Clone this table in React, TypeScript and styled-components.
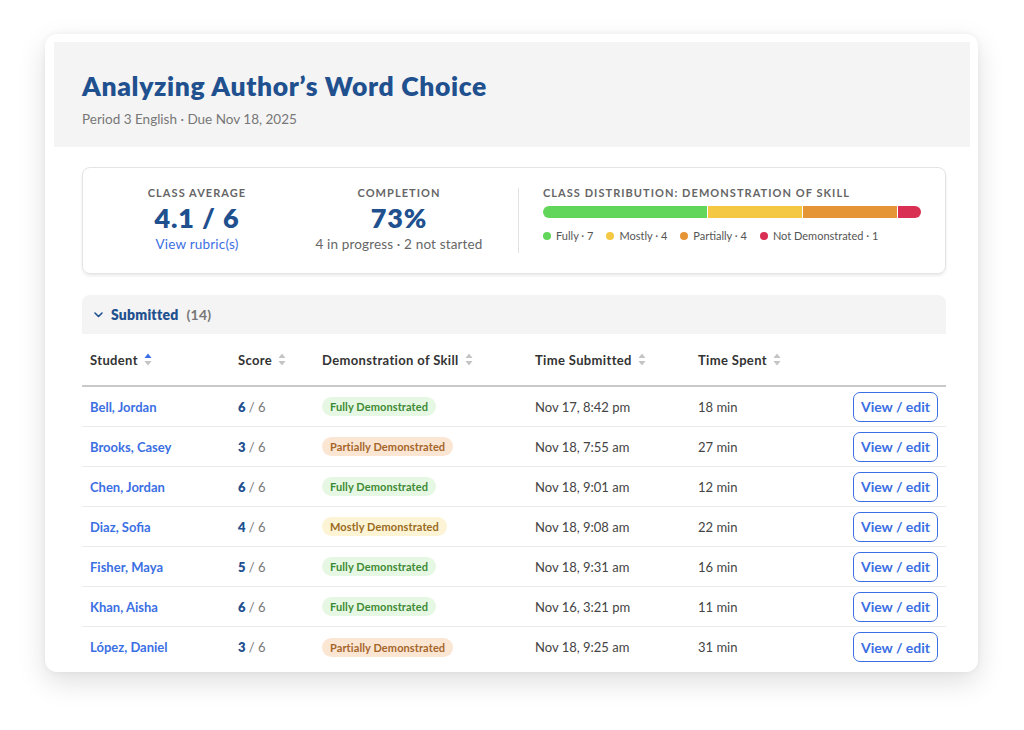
import React from "react";
import styled, { createGlobalStyle } from "styled-components";

const Global = createGlobalStyle`
  html, body { margin: 0; padding: 0; background: #ffffff; }
  body { font-family: "Lato", "Noto Sans", sans-serif; color: #333; -webkit-font-smoothing: antialiased; }
  * { box-sizing: border-box; }
`;

const Page = styled.div`
  padding: 34px 0 0 45px;
  width: 1024px;
  height: 730px;
`;

const Card = styled.div`
  width: 933px;
  height: 638px;
  background: #fff;
  border-radius: 12px;
  box-shadow: 0 10px 28px rgba(0, 0, 0, 0.13), 0 0 6px rgba(0, 0, 0, 0.05);
  padding: 8px 8px 5px 9px;
  display: flex;
  flex-direction: column;
`;

const Header = styled.header`
  background: #f4f4f4;
  height: 105px;
  padding: 28px 28px 0 28px;
`;

const Title = styled.h1`
  margin: 0;
  font-size: 26.5px;
  line-height: 32px;
  font-weight: 800;
  color: #21508f;
  letter-spacing: 0.65px;
`;

const Subtitle = styled.div`
  margin-top: 7px;
  font-size: 13.5px;
  line-height: 20px;
  color: #777;
`;

const Body = styled.div`
  padding: 20px 24px 0 28px;
  display: flex;
  flex-direction: column;
`;

const Stats = styled.section`
  height: 107px;
  border: 1px solid #e4e4e4;
  border-radius: 8px;
  box-shadow: 0 2px 3px rgba(0, 0, 0, 0.08);
  display: flex;
  align-items: flex-start;
  padding: 18px 24px 0 13px;
`;

const StatCol = styled.div`
  width: 202px;
  display: flex;
  flex-direction: column;
  align-items: center;
`;

const Label = styled.div`
  font-size: 11px;
  line-height: 14px;
  font-weight: 700;
  letter-spacing: 1.05px;
  text-transform: uppercase;
  color: #666;
`;

const BigValue = styled.div`
  margin-top: 3px;
  font-size: 27px;
  line-height: 30px;
  font-weight: 800;
  letter-spacing: 0.9px;
  color: #21508f;
`;

const RubricLink = styled.a`
  margin-top: 2px;
  font-size: 13.5px;
  line-height: 18px;
  letter-spacing: 0.2px;
  color: #3b6fe3;
  text-decoration: none;
`;

const Muted = styled.div`
  margin-top: 2px;
  font-size: 13.5px;
  line-height: 18px;
  letter-spacing: 0.15px;
  color: #666;
`;

const Divider = styled.div`
  width: 1px;
  align-self: stretch;
  margin: 2px 24px 20px 18px;
  background: #e2e2e2;
`;

const Dist = styled.div`
  flex: 1;
  display: flex;
  flex-direction: column;
`;

const Bar = styled.div`
  margin-top: 6px;
  height: 12px;
  border-radius: 6px;
  overflow: hidden;
  display: flex;
  gap: 1px;
  background: #fff;
`;

const Seg = styled.div<{ $c: string; $n: number }>`
  flex: ${(p) => p.$n} 1 0;
  background: ${(p) => p.$c};
`;

const Legend = styled.div`
  margin-top: 11px;
  display: flex;
  gap: 13px;
  font-size: 11px;
  line-height: 14px;
  color: #555;
`;

const LegendItem = styled.div`
  display: flex;
  align-items: center;
  gap: 5px;
`;

const Dot = styled.span<{ $c: string }>`
  width: 8px;
  height: 8px;
  border-radius: 50%;
  background: ${(p) => p.$c};
`;

const Section = styled.section`
  margin-top: 21px;
`;

const SectionBar = styled.div`
  height: 39px;
  background: #f4f4f4;
  border-radius: 8px 8px 0 0;
  display: flex;
  align-items: center;
  padding-left: 12px;
  gap: 8px;
`;

const SectionTitle = styled.span`
  font-size: 14px;
  font-weight: 800;
  letter-spacing: 0.2px;
  color: #21508f;
`;

const SectionCount = styled.span`
  font-size: 14px;
  font-weight: 700;
  letter-spacing: 0.3px;
  color: #777;
`;

const cols = "148px 84px 213px 163px 1fr 85px";

const HeadRow = styled.div`
  display: grid;
  grid-template-columns: ${cols};
  height: 53px;
  align-items: center;
  padding: 0 8px;
  border-bottom: 2px solid #c9c9c9;
`;

const HeadCell = styled.div`
  display: flex;
  align-items: center;
  gap: 6px;
  font-size: 13px;
  font-weight: 700;
  letter-spacing: 0.35px;
  color: #333;
`;

const Row = styled.div`
  display: grid;
  grid-template-columns: ${cols};
  height: 40px;
  align-items: center;
  padding: 0 8px;
  border-bottom: 1px solid #ececec;
  &:last-child { border-bottom: none; }
`;

const Name = styled.a`
  font-size: 13px;
  font-weight: 700;
  color: #3b6fe3;
  text-decoration: none;
`;

const Score = styled.div`
  font-size: 13px;
  color: #777;
  b { color: #21508f; font-weight: 800; }
`;

const tones: Record<string, { bg: string; fg: string }> = {
  Fully: { bg: "#e6f8e3", fg: "#3e8a35" },
  Mostly: { bg: "#fdf4d6", fg: "#9a6b1c" },
  Partially: { bg: "#fbe6d4", fg: "#a5652a" },
};

const Badge = styled.span<{ $k: string }>`
  justify-self: start;
  display: inline-flex;
  align-items: center;
  height: 19px;
  padding: 0 8px;
  border-radius: 10px;
  font-size: 11px;
  font-weight: 700;
  letter-spacing: 0.1px;
  background: ${(p) => tones[p.$k].bg};
  color: ${(p) => tones[p.$k].fg};
`;

const Cell = styled.div`
  font-size: 13px;
  color: #444;
`;

const Button = styled.button`
  width: 85px;
  height: 30px;
  border: 1.5px solid #3b6fe3;
  border-radius: 7px;
  background: #fff;
  color: #3b6fe3;
  font-family: inherit;
  font-size: 14px;
  font-weight: 700;
  padding: 0;
  cursor: pointer;
`;

const SortIcon = ({ active }: { active?: boolean }) => (
  <svg width="8" height="13" viewBox="0 0 8 13">
    <path d="M4 0.5 L7.5 5 H0.5 Z" fill={active ? "#3b6fe3" : "#c4c4c4"} />
    <path d="M4 12.5 L7.5 8 H0.5 Z" fill="#c4c4c4" />
  </svg>
);

const Chevron = () => (
  <svg width="9" height="6" viewBox="0 0 9 6">
    <path d="M1 1 L4.5 4.5 L8 1" fill="none" stroke="#21508f" strokeWidth="1.6" strokeLinecap="round" strokeLinejoin="round" />
  </svg>
);

const rows = [
  ["Bell, Jordan", 6, "Fully", "Nov 17, 8:42 pm", "18 min"],
  ["Brooks, Casey", 3, "Partially", "Nov 18, 7:55 am", "27 min"],
  ["Chen, Jordan", 6, "Fully", "Nov 18, 9:01 am", "12 min"],
  ["Diaz, Sofia", 4, "Mostly", "Nov 18, 9:08 am", "22 min"],
  ["Fisher, Maya", 5, "Fully", "Nov 18, 9:31 am", "16 min"],
  ["Khan, Aisha", 6, "Fully", "Nov 16, 3:21 pm", "11 min"],
  ["López, Daniel", 3, "Partially", "Nov 18, 9:25 am", "31 min"],
] as const;

export default function App() {
  return (
    <Page>
      <Global />
      <Card>
        <Header>
          <Title>Analyzing Author’s Word Choice</Title>
          <Subtitle>Period 3 English · Due Nov 18, 2025</Subtitle>
        </Header>
        <Body>
          <Stats>
            <StatCol>
              <Label>Class Average</Label>
              <BigValue>4.1 / 6</BigValue>
              <RubricLink href="#">View rubric(s)</RubricLink>
            </StatCol>
            <StatCol>
              <Label>Completion</Label>
              <BigValue>73%</BigValue>
              <Muted>4 in progress · 2 not started</Muted>
            </StatCol>
            <Divider />
            <Dist>
              <Label>Class Distribution: Demonstration of Skill</Label>
              <Bar>
                <Seg $c="#62d65a" $n={7} />
                <Seg $c="#f5c844" $n={4} />
                <Seg $c="#e69536" $n={4} />
                <Seg $c="#d92f52" $n={1} />
              </Bar>
              <Legend>
                <LegendItem><Dot $c="#62d65a" />Fully · 7</LegendItem>
                <LegendItem><Dot $c="#f5c844" />Mostly · 4</LegendItem>
                <LegendItem><Dot $c="#e69536" />Partially · 4</LegendItem>
                <LegendItem><Dot $c="#d92f52" />Not Demonstrated · 1</LegendItem>
              </Legend>
            </Dist>
          </Stats>
          <Section>
            <SectionBar>
              <Chevron />
              <SectionTitle>Submitted</SectionTitle>
              <SectionCount>(14)</SectionCount>
            </SectionBar>
            <HeadRow>
              <HeadCell>Student <SortIcon active /></HeadCell>
              <HeadCell>Score <SortIcon /></HeadCell>
              <HeadCell>Demonstration of Skill <SortIcon /></HeadCell>
              <HeadCell>Time Submitted <SortIcon /></HeadCell>
              <HeadCell>Time Spent <SortIcon /></HeadCell>
            </HeadRow>
            {rows.map(([name, score, level, time, spent]) => (
              <Row key={name}>
                <Name href="#">{name}</Name>
                <Score><b>{score}</b> / 6</Score>
                <Badge $k={level}>{level} Demonstrated</Badge>
                <Cell>{time}</Cell>
                <Cell>{spent}</Cell>
                <Button>View / edit</Button>
              </Row>
            ))}
          </Section>
        </Body>
      </Card>
    </Page>
  );
}
